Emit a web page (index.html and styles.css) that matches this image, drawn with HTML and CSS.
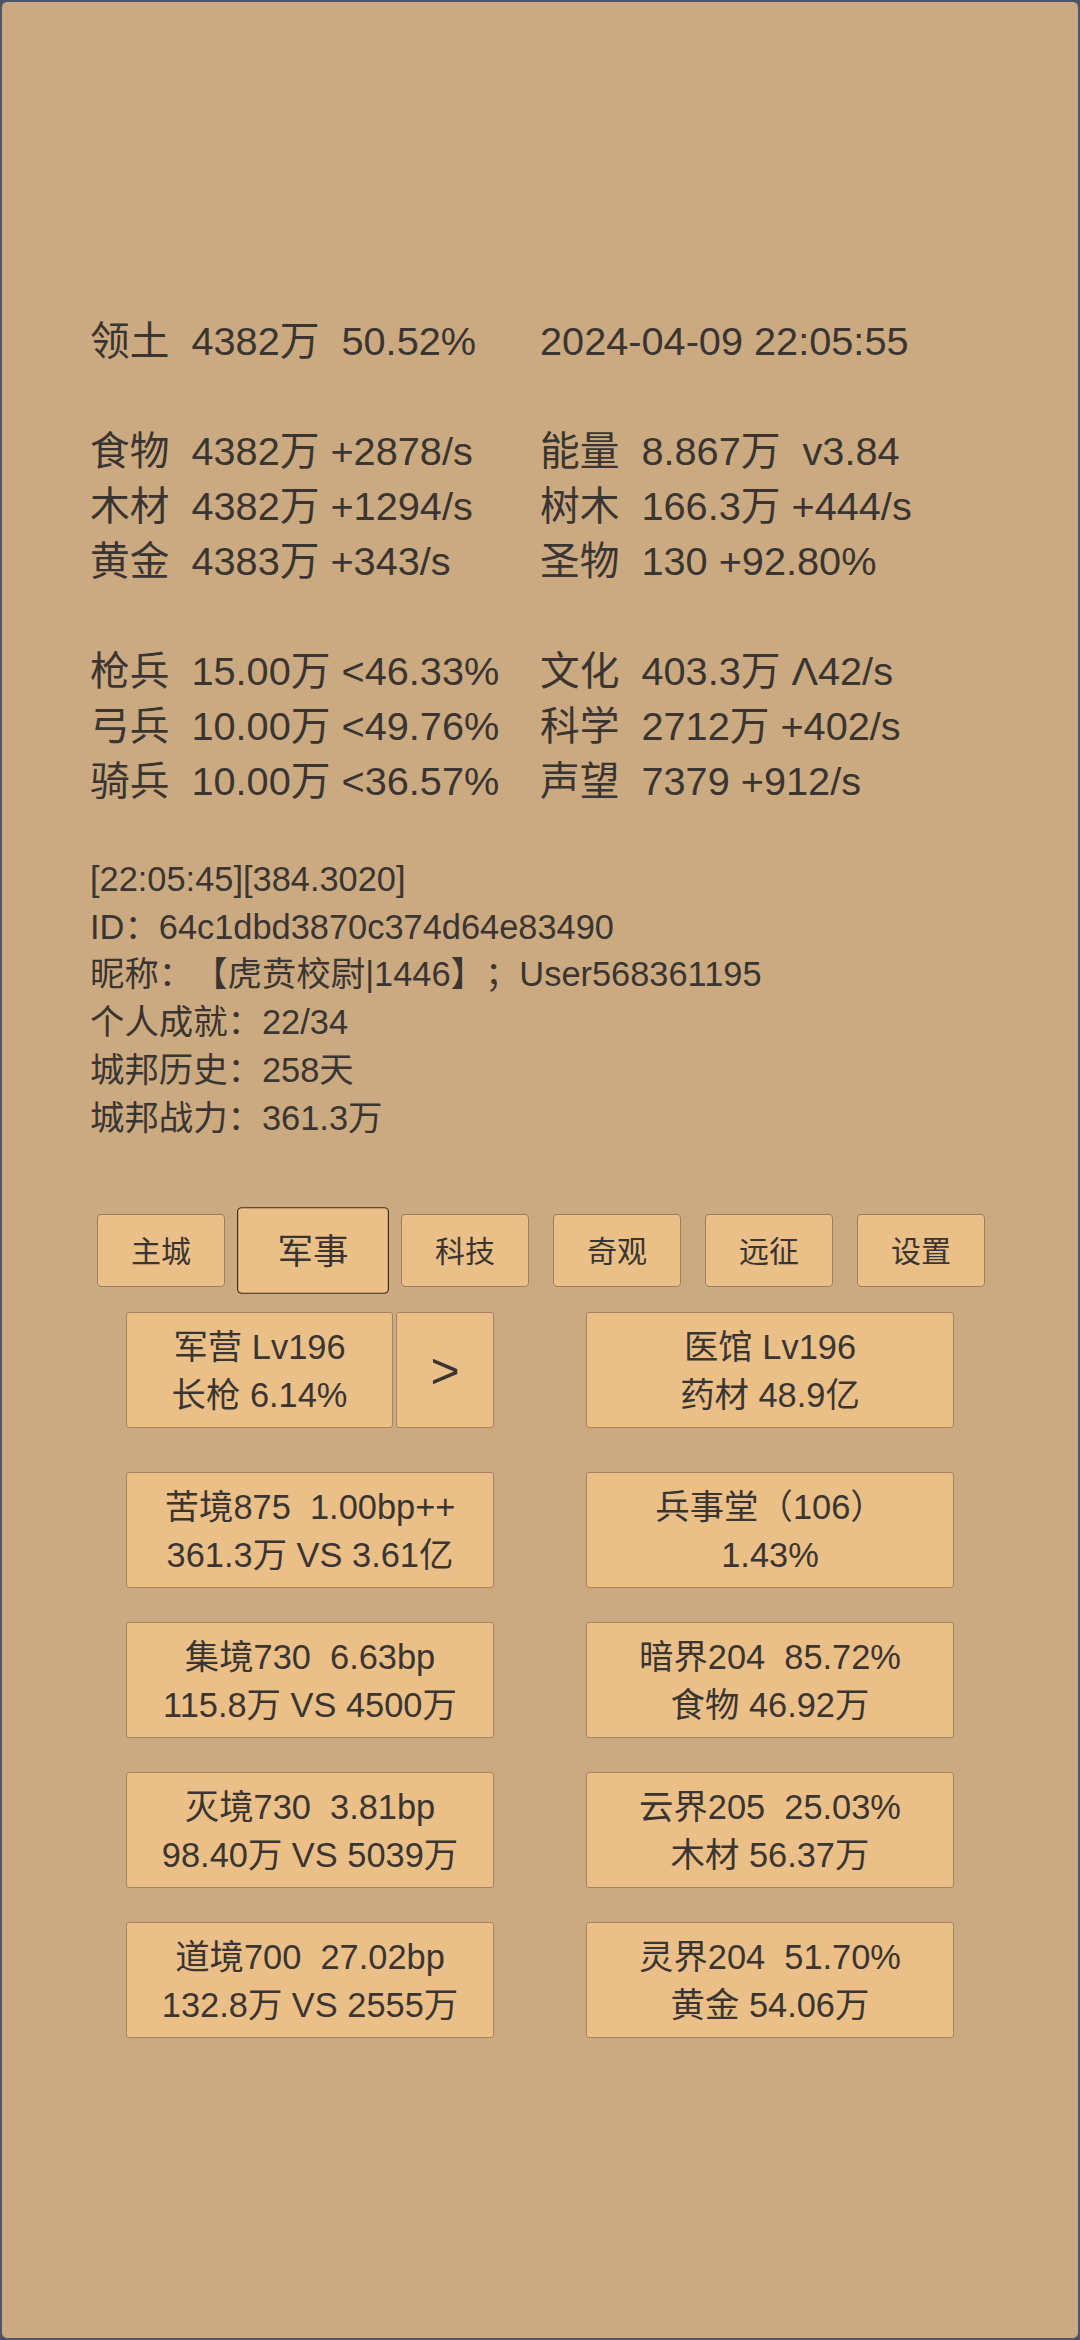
FILE: index.html
```html
<!DOCTYPE html>
<html lang="zh">
<head>
<meta charset="utf-8">
<title>城邦</title>
<link rel="stylesheet" href="styles.css">
</head>
<body>
<div class="screen">
  <div class="stats">
    <div class="line">领土  4382万  50.52%</div>
    <div class="line">2024-04-09 22:05:55</div>
    <div class="line"></div>
    <div class="line"></div>
    <div class="line">食物  4382万 +2878/s</div>
    <div class="line">能量  8.867万  v3.84</div>
    <div class="line">木材  4382万 +1294/s</div>
    <div class="line">树木  166.3万 +444/s</div>
    <div class="line">黄金  4383万 +343/s</div>
    <div class="line">圣物  130 +92.80%</div>
    <div class="line"></div>
    <div class="line"></div>
    <div class="line">枪兵  15.00万 &lt;46.33%</div>
    <div class="line">文化  403.3万 Λ42/s</div>
    <div class="line">弓兵  10.00万 &lt;49.76%</div>
    <div class="line">科学  2712万 +402/s</div>
    <div class="line">骑兵  10.00万 &lt;36.57%</div>
    <div class="line">声望  7379 +912/s</div>
  </div>

  <div class="info">
    <div class="info-line">[22:05:45][384.3020]</div>
    <div class="info-line">ID：64c1dbd3870c374d64e83490</div>
    <div class="info-line">昵称：【虎贲校尉|1446】；User568361195</div>
    <div class="info-line">个人成就：22/34</div>
    <div class="info-line">城邦历史：258天</div>
    <div class="info-line">城邦战力：361.3万</div>
  </div>

  <div class="tabs">
    <div class="tab">主城</div>
    <div class="tab active">军事</div>
    <div class="tab">科技</div>
    <div class="tab">奇观</div>
    <div class="tab">远征</div>
    <div class="tab">设置</div>
  </div>

  <div class="cards">
    <div class="split">
      <div class="card grow">军营 Lv196<br>长枪 6.14%</div>
      <div class="card arrow">&gt;</div>
    </div>
    <div class="card">医馆 Lv196<br>药材 48.9亿</div>

    <div class="card">苦境875  1.00bp++<br>361.3万 VS 3.61亿</div>
    <div class="card">兵事堂（106）<br>1.43%</div>

    <div class="card">集境730  6.63bp<br>115.8万 VS 4500万</div>
    <div class="card">暗界204  85.72%<br>食物 46.92万</div>

    <div class="card">灭境730  3.81bp<br>98.40万 VS 5039万</div>
    <div class="card">云界205  25.03%<br>木材 56.37万</div>

    <div class="card">道境700  27.02bp<br>132.8万 VS 2555万</div>
    <div class="card">灵界204  51.70%<br>黄金 54.06万</div>
  </div>
</div>
</body>
</html>
```

FILE: styles.css
```css
html, body {
  margin: 0;
  padding: 0;
  background: #4d536c;
}

.screen {
  box-sizing: border-box;
  width: 1080px;
  height: 2340px;
  border: 2px solid #4d536c;
  border-radius: 7px;
  background: #cbaa81;
  color: #3a3531;
  font-family: "Liberation Sans", "Noto Sans CJK SC", sans-serif;
  text-spacing-trim: space-all;
  padding: 312px 0 0 88px;
  overflow: hidden;
}

.stats {
  display: grid;
  grid-template-columns: 450px 450px;
  font-size: 39.7px;
  line-height: 55px;
}

.line {
  height: 55px;
  white-space: pre;
}

.info {
  margin-top: 47px;
  font-size: 34.4px;
  line-height: 47.7px;
}

.info-line {
  white-space: pre;
}

.tabs {
  display: flex;
  gap: 24px;
  margin: 72px 0 0 7px;
  height: 73px;
}

.tab {
  box-sizing: border-box;
  width: 128px;
  height: 73px;
  padding-bottom: 4px;
  background: #ebc088;
  border: 1px solid #9e7f5d;
  border-radius: 4px;
  display: flex;
  align-items: center;
  justify-content: center;
  font-size: 30px;
}

.tab.active {
  border-color: #3a2d1f;
  transform: scale(1.1875);
}

.cards {
  display: grid;
  grid-template-columns: 368px 368px;
  column-gap: 92px;
  row-gap: 34px;
  margin: 25px 0 0 36px;
}

.cards > :nth-child(-n+2) {
  margin-bottom: 10px;
}

.split {
  display: flex;
  gap: 3px;
}

.card {
  box-sizing: border-box;
  height: 116px;
  padding-top: 2px;
  background: #ebc088;
  border: 1px solid #a4855f;
  border-radius: 3px;
  display: flex;
  align-items: center;
  justify-content: center;
  text-align: center;
  font-size: 34.4px;
  line-height: 48px;
  white-space: pre;
}

.card.grow {
  flex: 1;
}

.card.arrow {
  width: 98px;
  font-size: 50px;
}
```
